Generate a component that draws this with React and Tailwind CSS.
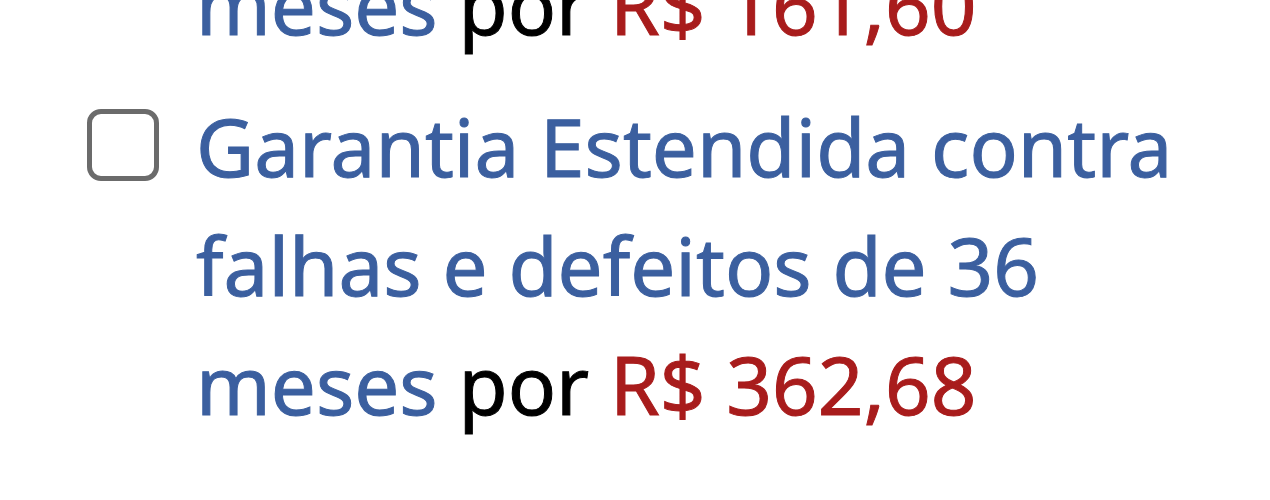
import React, { useState } from "react";

const Price = ({ value }) => (
  <>
    <span className="text-black">por</span>{" "}
    <span className="whitespace-nowrap text-[#a81c1c]">R$ {value}</span>
  </>
);

const App = () => {
  const [checked, setChecked] = useState(false);

  return (
    <main className="h-screen overflow-hidden bg-white font-['Noto_Sans',sans-serif] text-[80px] leading-[119px] text-[#3b5f9f] [-webkit-text-stroke:1px]">
      {/* end of the previous warranty, scrolled under the top edge */}
      <p className="-mt-[56px] mb-[23px] pl-[196px]">
        meses <Price value="161,60" />
      </p>
      <div className="flex items-start gap-[37px] pl-[87px]">
        <input
          id="warranty-36"
          type="checkbox"
          checked={checked}
          onChange={(e) => setChecked(e.target.checked)}
          className="mt-[23px] size-[72px] shrink-0 appearance-none rounded-[14px] border-5 border-[#6b6b6b] bg-white checked:bg-[#3b5f9f]"
        />
        <div>
          <label htmlFor="warranty-36">
            <a href="#warranty-36">
              Garantia Estendida contra
              <br />
              falhas e defeitos de 36
              <br />
              meses
            </a>{" "}
            <Price value="362,68" />
          </label>
        </div>
      </div>
    </main>
  );
};

export default App;
